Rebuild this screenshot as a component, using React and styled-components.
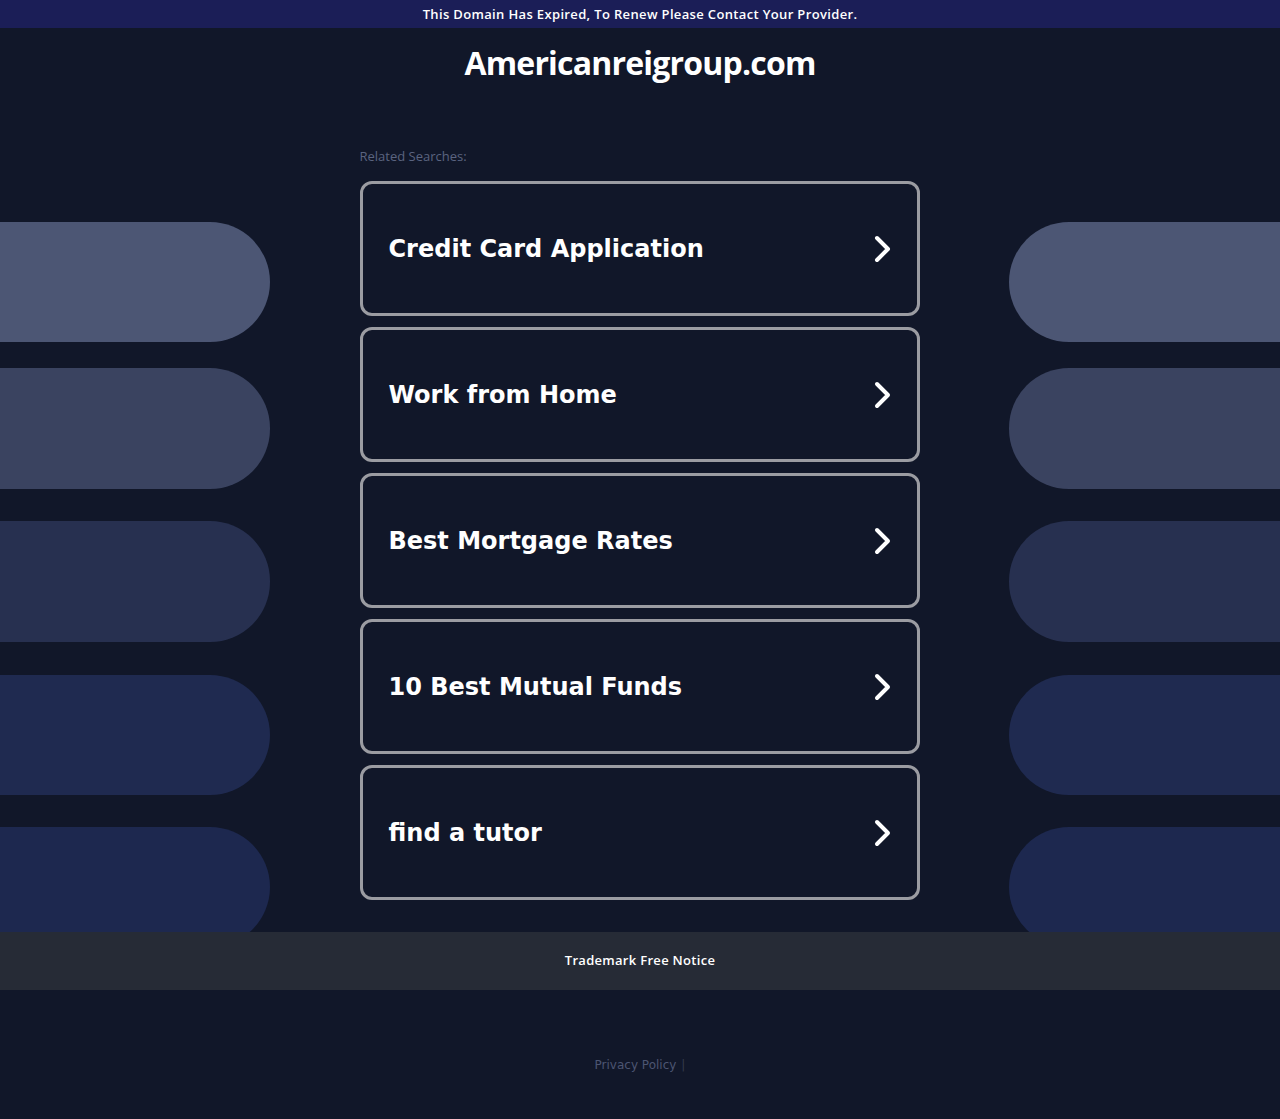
import styled, { createGlobalStyle } from 'styled-components'

const buscas = [
    'Credit Card Application',
    'Work from Home',
    'Best Mortgage Rates',
    '10 Best Mutual Funds',
    'find a tutor',
]

// faixas decorativas das laterais: cor e distancia da faixa anterior
const faixas = [
    { cor: '#4c5674', espaco: 0, altura: 120 },
    { cor: '#3a4360', espaco: 26, altura: 121 },
    { cor: '#273050', espaco: 32, altura: 121 },
    { cor: '#1f2a50', espaco: 33, altura: 120 },
    { cor: '#1d284f', espaco: 32, altura: 120 },
]

const Estilo = createGlobalStyle`
    body{
        margin: 0;
        background-color: #111729;
        font-family: "DejaVu Sans", sans-serif;
    }
`

const Seta = () =>(
    <svg width="20" height="28" viewBox="0 0 20 28">
        <polyline points="4,3 15,14 4,25" fill="none" stroke="#ffffff" strokeWidth="4" strokeLinecap="round" strokeLinejoin="round"/>
    </svg>
)

const Lateral = ({ lado }) =>(
    <ColunaLateral>
        {faixas.map((faixa, index) => (
            <Faixa key={index} lado={lado} cor={faixa.cor} espaco={faixa.espaco} altura={faixa.altura}/>
        ))}
    </ColunaLateral>
)

const App = () =>{
    return (
        <>
            <Estilo/>
            <Aviso>This Domain Has Expired, To Renew Please Contact Your Provider.</Aviso>
            <Titulo>Americanreigroup.com</Titulo>

            <Principal>
                <Lateral lado="esquerda"/>
                <Centro>
                    <Rotulo>Related Searches:</Rotulo>
                    <Lista>
                        {buscas.map((busca, index) => (
                            <Cartao key={index}>
                                <span>{busca}</span>
                                <Seta/>
                            </Cartao>
                        ))}
                    </Lista>
                </Centro>
                <Lateral lado="direita"/>
            </Principal>

            <Rodape>Trademark Free Notice</Rodape>
            <Links>
                <a>Privacy Policy</a>
                <Separador>|</Separador>
            </Links>
        </>
    )
}

const Aviso = styled.div`
    height: 28px;
    line-height: 28px;
    background-color: #1b1e57;
    color: #ffffff;
    text-align: center;
    font-family: "Open Sans", sans-serif;
    font-weight: 600;
    font-size: 13px;
    letter-spacing: 0.35px;
`

const Titulo = styled.h1`
    margin: 0;
    padding-top: 15px;
    height: 77px;
    line-height: 40px;
    text-align: center;
    color: #ffffff;
    font-family: "Open Sans", sans-serif;
    font-weight: 700;
    font-size: 32px;
    letter-spacing: -0.8px;
`

const Principal = styled.main`
    display: grid;
    grid-template-columns: 270px 560px 271px;
    justify-content: space-between;
    overflow: hidden;
`

const ColunaLateral = styled.div`
    contain: size;
    overflow: hidden;
    padding-top: 102px;
    display: flex;
    flex-direction: column;
`

const Faixa = styled.div`
    flex-shrink: 0;
    height: ${props => props.altura}px;
    margin-top: ${props => props.espaco}px;
    background-color: ${props => props.cor};
    border-radius: ${props => props.lado === 'esquerda' ? '0 60px 60px 0' : '60px 0 0 60px'};
`

const Centro = styled.section`
    padding: 27px 0 32px;
`

const Rotulo = styled.p`
    margin: 0 0 16px;
    line-height: 18px;
    font-size: 13px;
    color: #5b6480;
    font-family: "Open Sans", sans-serif;
`

const Lista = styled.div`
    display: flex;
    flex-direction: column;
    gap: 11px;
`

const Cartao = styled.a`
    box-sizing: border-box;
    height: 135px;
    display: flex;
    align-items: center;
    justify-content: space-between;
    padding: 0 24px 0 26px;
    border: 3px solid #9b9ca2;
    border-radius: 12px;
    color: #ffffff;
    font-weight: 700;
    font-size: 24px;
    cursor: pointer;

    span{
        white-space: nowrap;
    }
`

const Rodape = styled.footer`
    height: 58px;
    line-height: 57px;
    background-color: #262b36;
    color: #ffffff;
    text-align: center;
    font-family: "Open Sans", sans-serif;
    font-weight: 600;
    font-size: 13px;
    letter-spacing: 0.3px;
`

const Links = styled.div`
    height: 129px;
    padding-top: 67px;
    box-sizing: border-box;
    text-align: center;
    font-size: 12px;
    line-height: 16px;
    color: #4c5572;
`

const Separador = styled.span`
    margin-left: 5px;
    color: #343a4c;
`

export default App
